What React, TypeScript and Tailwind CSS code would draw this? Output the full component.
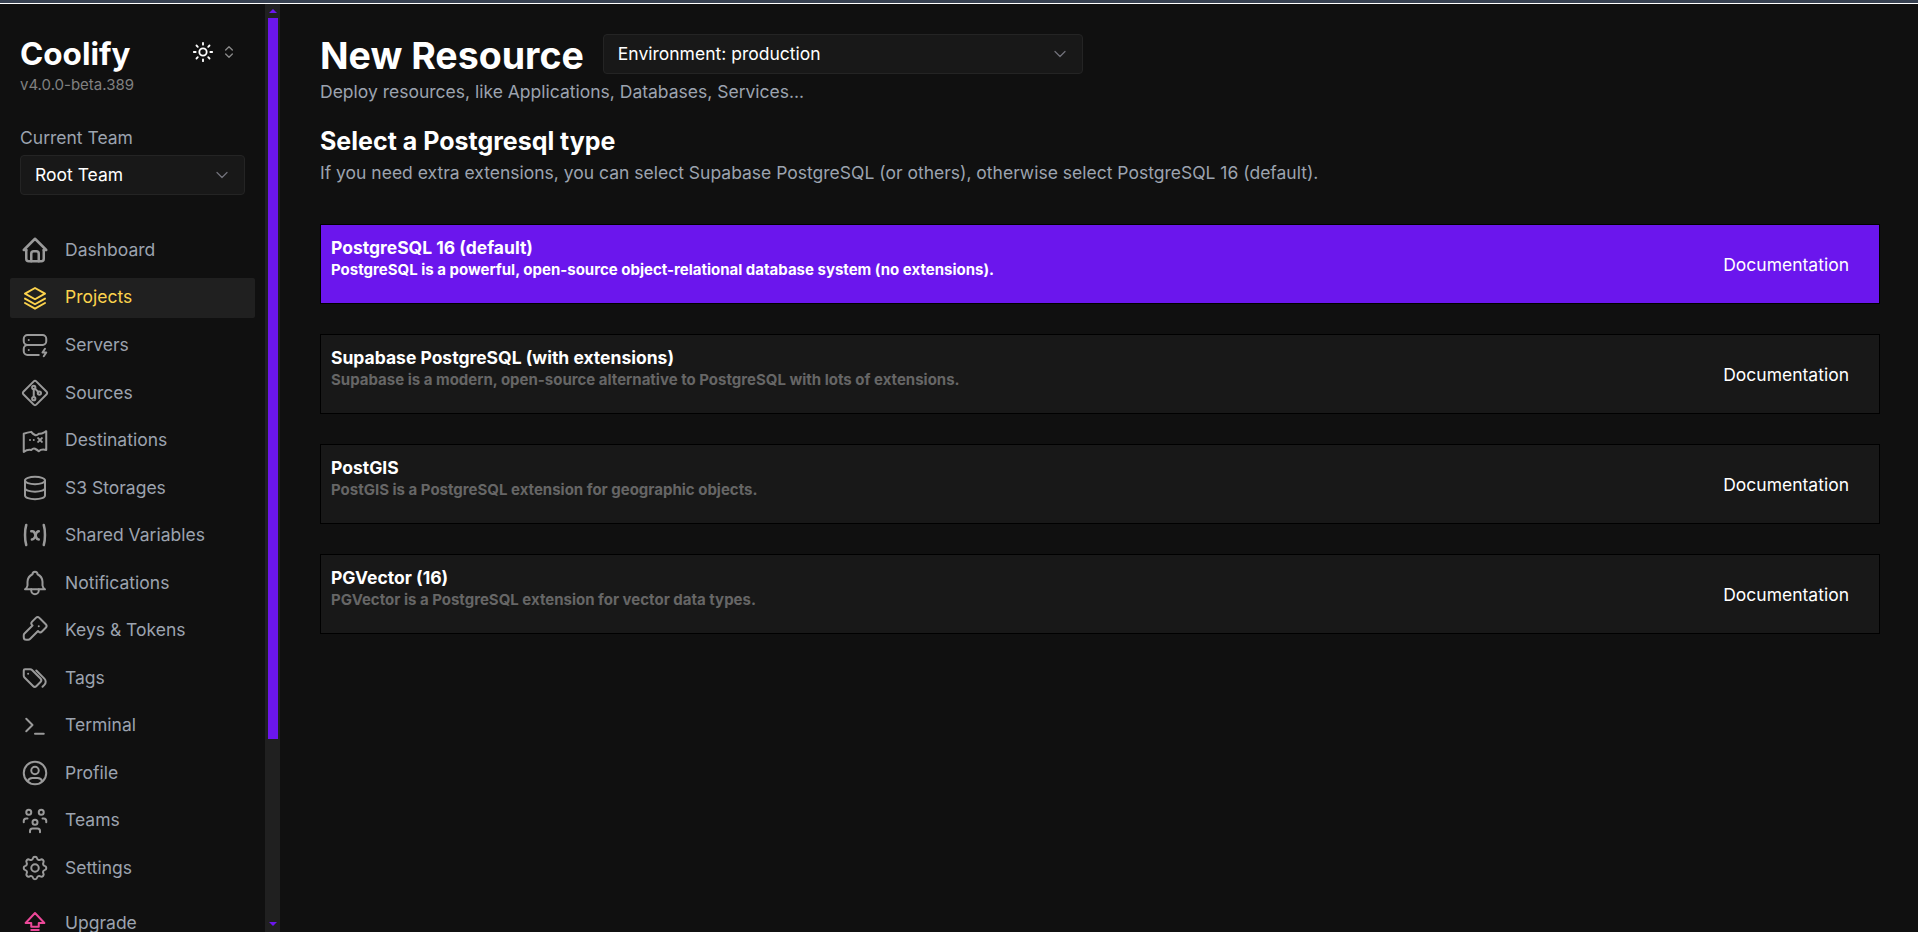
import React from "react";

const stroke = { fill: "none", stroke: "currentColor", strokeWidth: 2, strokeLinecap: "round" as const, strokeLinejoin: "round" as const };
const Ic = ({ children, sw = 2 }: { children: React.ReactNode; sw?: number }) => (
  <svg viewBox="0 0 24 24" {...stroke} strokeWidth={sw} className="w-[30px] h-[30px] shrink-0">{children}</svg>
);

const icons: Record<string, React.ReactNode> = {
  Dashboard: <Ic><path d="M5 12H3l9-9 9 9h-2" /><path d="M5 12v7a2 2 0 0 0 2 2h10a2 2 0 0 0 2-2v-7" /><path d="M9 21v-6a2 2 0 0 1 2-2h2a2 2 0 0 1 2 2v6" /></Ic>,
  Projects: <Ic sw={1.6}><path d="M12 4 4 8.500l8 4.500 8-4.500z" /><path d="m4 12.500 8 4.500 8-4.500" /><path d="m4 16 8 4.500 8-4.500" /></Ic>,
  Servers: <Ic sw={1.6}><path d="M3 7a3 3 0 0 1 3-3h12a3 3 0 0 1 3 3v2a3 3 0 0 1-3 3H6a3 3 0 0 1-3-3z" /><path d="M15 20H6a3 3 0 0 1-3-3v-2a3 3 0 0 1 3-3h12" /><path d="M7 8v.01M7 16v.01M20 15l-2 3h3l-2 3" /></Ic>,
  Sources: <Ic sw={1.6}><path d="M2.700 11 11 2.700a1.400 1.400 0 0 1 2 0l8.300 8.300a1.400 1.400 0 0 1 0 2L13 21.300a1.400 1.400 0 0 1-2 0L2.700 13a1.400 1.400 0 0 1 0-2z" /><circle cx="11" cy="7.500" r="1.300" /><circle cx="11" cy="16.500" r="1.300" /><circle cx="15.500" cy="12" r="1.300" /><path d="M11 9v6M12 8.500l2.500 2.500" /></Ic>,
  Destinations: <Ic sw={1.6}><path d="M3 7c3-1 6-1.500 6-1.500 1 1.500 2 2 3 2.500s2 0 3-1c2 .5 4-1 6-2v15c-2-.5-4-1-6 1-1-1-2-1.500-3-2s-2 0-3 1c-2-.5-4 0-6 1.500z" /><path d="M8 12h.01M11 12h.01M14.500 10.500l3 3M17.500 10.500l-3 3" /></Ic>,
  "S3 Storages": <Ic sw={1.6}><ellipse cx="12" cy="6" rx="8" ry="3" /><path d="M4 6v6c0 1.700 3.600 3 8 3s8-1.300 8-3V6" /><path d="M4 12v6c0 1.700 3.600 3 8 3s8-1.300 8-3v-6" /></Ic>,
  "Shared Variables": <Ic><path d="M5 4C3.700 8 3.700 16 5 20" /><path d="M19 4c1.300 4 1.300 12 0 16" /><path d="M9 9h1c1 0 1.500.5 2 2l1 3c.5 1.500 1 1.500 2 1.500" /><path d="M9.500 15.500c1.500 0 2.500-1.500 3-3.500s1.500-3 2.500-3" /></Ic>,
  Notifications: <Ic sw={1.6}><path d="M10 5a2 2 0 1 1 4 0 7 7 0 0 1 4 6v3a4 4 0 0 0 2 3H4a4 4 0 0 0 2-3v-3a7 7 0 0 1 4-6" /><path d="M9 17v1a3 3 0 0 0 6 0v-1" /></Ic>,
  "Keys & Tokens": <Ic sw={1.6}><path d="M16.600 3.400 20.600 7.400a2 2 0 0 1 0 2.800l-3 3a2 2 0 0 1-2.800 0l-.4-.4-6.400 6.400a2 2 0 0 1-1.400.6H5a2 2 0 0 1-2-2v-1.600a2 2 0 0 1 .6-1.400l6.400-6.400-.3-.3a2 2 0 0 1 0-2.800l3-3a2 2 0 0 1 2.800 0z" /><path d="M15 9h.01" /></Ic>,
  Tags: <Ic sw={1.6}><path d="M3 6v4.200a2 2 0 0 0 .6 1.400l6.800 6.800a2 2 0 0 0 2.800 0l3.200-3.200a2 2 0 0 0 0-2.800L9.600 5.600A2 2 0 0 0 8.200 5H4a1 1 0 0 0-1 1z" /><path d="m18 19 1.500-1.500a3.500 3.500 0 0 0 0-5L13 6" /><path d="M6.500 8.500h.01" /></Ic>,
  Terminal: <Ic sw={1.6}><path d="m5 7 5 5-5 5" /><path d="M12 19h7" /></Ic>,
  Profile: <Ic sw={1.6}><circle cx="12" cy="12" r="9" /><circle cx="12" cy="10" r="3" /><path d="M6.200 18.500A4 4 0 0 1 10 16h4a4 4 0 0 1 3.800 2.500" /></Ic>,
  Teams: <Ic sw={1.6}><circle cx="12" cy="13" r="2" /><path d="M8 21v-1a2 2 0 0 1 2-2h4a2 2 0 0 1 2 2v1" /><circle cx="7" cy="5" r="2" /><circle cx="17" cy="5" r="2" /><path d="M3 13v-1a2 2 0 0 1 2-2h1M21 13v-1a2 2 0 0 0-2-2h-1" /></Ic>,
  Settings: <Ic sw={1.6}><path d="M10.300 4.300c.4-1.800 3-1.800 3.400 0a1.700 1.700 0 0 0 2.600 1.100c1.500-.9 3.300.8 2.400 2.400a1.700 1.700 0 0 0 1 2.500c1.800.4 1.800 3 0 3.400a1.700 1.700 0 0 0-1 2.600c.9 1.500-.8 3.300-2.400 2.400a1.700 1.700 0 0 0-2.600 1c-.4 1.800-3 1.800-3.400 0a1.700 1.700 0 0 0-2.600-1c-1.500.9-3.300-.8-2.400-2.400a1.700 1.700 0 0 0-1-2.600c-1.800-.4-1.800-3 0-3.400a1.700 1.700 0 0 0 1-2.500c-.9-1.600.8-3.300 2.400-2.400a1.700 1.700 0 0 0 2.600-1.100z" /><circle cx="12" cy="12" r="3" /></Ic>,
  Upgrade: <Ic sw={1.6}><path d="M9 12H4.500L12 4l7.500 8H15v3H9z" /><path d="M9 20h6M9 17.500h6" /></Ic>,
};

const nav = ["Dashboard", "Projects", "Servers", "Sources", "Destinations", "S3 Storages", "Shared Variables", "Notifications", "Keys & Tokens", "Tags", "Terminal", "Profile", "Teams", "Settings"];

const Chevron = () => (
  <svg viewBox="0 0 24 24" fill="none" stroke="#71717a" strokeWidth="1.500" strokeLinecap="round" strokeLinejoin="round" className="w-[20px] h-[20px]"><path d="m6 9 6 6 6-6" /></svg>
);

const cards = [
  { t: "PostgreSQL 16 (default)", d: "PostgreSQL is a powerful, open-source object-relational database system (no extensions).", active: true },
  { t: "Supabase PostgreSQL (with extensions)", d: "Supabase is a modern, open-source alternative to PostgreSQL with lots of extensions." },
  { t: "PostGIS", d: "PostGIS is a PostgreSQL extension for geographic objects." },
  { t: "PGVector (16)", d: "PGVector is a PostgreSQL extension for vector data types." },
];

export default function App() {
  return (
    <div className="h-[932px] w-full overflow-hidden bg-[#101010] flex flex-col font-['Inter',sans-serif]">
      <div className="h-[4px] shrink-0 bg-[#374151] border-b border-white" />
      <div className="flex flex-1 min-h-0">
        <aside className="w-[265px] shrink-0 overflow-hidden">
          <div className="pt-[32px] pl-[20px] pr-[20px] flex items-start justify-between">
            <div>
              <div className="text-[31.500px] leading-[36px] font-bold text-white">Coolify</div>
              <div className="text-[15px] leading-[16px] text-[#808080] mt-[5px]">v4.0.0-beta.389</div>
            </div>
            <div className="flex items-center gap-[7px] text-white mt-[5px] mr-[8px]">
              <svg viewBox="0 0 24 24" fill="none" stroke="currentColor" strokeWidth="2" strokeLinecap="round" className="w-[22px] h-[22px]"><circle cx="12" cy="12" r="4" /><path d="M12 2v2M12 20v2M4.900 4.900l1.400 1.400M17.700 17.700l1.400 1.400M2 12h2M20 12h2M4.900 19.100l1.400-1.400M17.700 6.300l1.400-1.400" /></svg>
              <svg viewBox="0 0 24 24" fill="none" stroke="#8a8a8a" strokeWidth="2" strokeLinecap="round" strokeLinejoin="round" className="w-[16px] h-[16px]"><path d="m7 9 5-5 5 5M7 15l5 5 5-5" /></svg>
            </div>
          </div>
          <div className="px-[20px] mt-[33px]">
            <div className="text-[17.500px] leading-[24px] text-[#9ca3af]">Current Team</div>
            <div className="mt-[5px] h-[40px] rounded-[4px] border border-[#242424] bg-[#181818] flex items-center justify-between pl-[14px] pr-[12px] text-white text-[17.500px]">
              <span>Root Team</span>
              <Chevron />
            </div>
          </div>
          <nav className="mt-[35px] px-[10px]">
            {nav.map((n) => (
              <div key={n} className={`h-[40px] mb-[7.550px] flex items-center gap-[15px] pl-[10px] rounded-[2px] text-[17.500px] ${n === "Projects" ? "bg-[#202020] text-[#fcd34d]" : "text-[#9ca3af]"}`}>
                <span className={n === "Projects" ? "text-[#fcd34d]" : "text-[#9a9a9a]"}>{icons[n]}</span>
                <span>{n}</span>
              </div>
            ))}
            <div className="h-[40px] mt-[15px] flex items-center gap-[15px] pl-[10px] text-[17.500px] text-[#9ca3af]">
              <span className="text-[#ec4899]">{icons.Upgrade}</span>
              <span>Upgrade</span>
            </div>
          </nav>
        </aside>
        <div className="w-[15px] shrink-0 bg-[#202020] flex flex-col items-center mr-[40px]">
          <div className="h-[14px] flex items-center justify-center">
            <div className="w-0 h-0 border-x-[4px] border-x-transparent border-b-[4px] border-b-[#6b16ed]" />
          </div>
          <div className="w-[10px] h-[721px] bg-[#6b16ed]" />
          <div className="flex-1" />
          <div className="h-[10px] flex items-center justify-center mb-[3px]">
            <div className="w-0 h-0 border-x-[4px] border-x-transparent border-t-[4px] border-t-[#6b16ed]" />
          </div>
        </div>
        <main className="flex-1 min-w-0 pr-[38px] pt-[30px]">
          <div className="flex items-start gap-[19px]">
            <h1 className="text-[37.500px] leading-[40px] font-bold text-white mt-[2px]">New Resource</h1>
            <div className="w-[480px] h-[40px] rounded-[4px] border border-[#242424] bg-[#181818] flex items-center justify-between pl-[14px] pr-[12px] text-white text-[17.500px]">
              <span className="pt-[1px]">Environment: production</span>
              <Chevron />
            </div>
          </div>
          <p className="text-[17.500px] leading-[24px] text-[#9ca3af] mt-[4px]">Deploy resources, like Applications, Databases, Services...</p>
          <h2 className="text-[25px] leading-[32px] font-bold text-white mt-[21px]">Select a Postgresql type</h2>
          <p className="text-[17.500px] leading-[24px] text-[#9ca3af] mt-[4px]">If you need extra extensions, you can select Supabase PostgreSQL (or others), otherwise select PostgreSQL 16 (default).</p>
          <div className="mt-[39px] flex flex-col gap-[30px]">
            {cards.map((c) => (
              <div key={c.t} className={`h-[80px] border border-black flex justify-between pl-[10px] pr-[30px] ${c.active ? "bg-[#6b16ed]" : "bg-[#181818]"}`}>
                <div className="pt-[13px]">
                  <div className="text-[17.500px] leading-[20px] font-bold text-white">{c.t}</div>
                  <div className={`text-[15px] leading-[20px] font-bold mt-[2px] ${c.active ? "text-white" : "text-[#666666]"}`}>{c.d}</div>
                </div>
                <div className="text-[17.500px] text-white self-center mt-[3px]">Documentation</div>
              </div>
            ))}
          </div>
        </main>
      </div>
    </div>
  );
}
